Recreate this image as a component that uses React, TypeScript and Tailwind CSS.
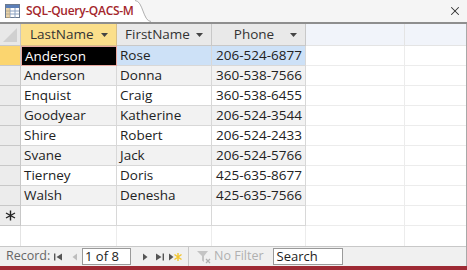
import React from 'react'
import { X } from 'lucide-react'

const rows = [
  ['Anderson', 'Rose', '206-524-6877'],
  ['Anderson', 'Donna', '360-538-7566'],
  ['Enquist', 'Craig', '360-538-6455'],
  ['Goodyear', 'Katherine', '206-524-3544'],
  ['Shire', 'Robert', '206-524-2433'],
  ['Svane', 'Jack', '206-524-5766'],
  ['Tierney', 'Doris', '425-635-8677'],
  ['Walsh', 'Denesha', '425-635-7566'],
]

function Arrow() {
  return (
    <svg width="7" height="4" viewBox="0 0 7 4" className="shrink-0">
      <path d="M0 0h7L3.5 4z" fill="#444" />
    </svg>
  )
}

function TabIcon() {
  return (
    <svg width="15" height="14" viewBox="0 0 15 14" className="shrink-0">
      <rect x="0.5" y="0.5" width="14" height="13" fill="#fff" stroke="#6b7a8f" />
      <rect x="1" y="1" width="13" height="3" fill="#5b7fb8" />
      <path d="M1 7h13M1 10h13M5 4v10M10 4v10" stroke="#8aa0c0" strokeWidth="1" />
      <rect x="1" y="4" width="4" height="10" fill="#d8b470" opacity="0.6" />
    </svg>
  )
}

export default function App() {
  const font = { fontFamily: '"Open Sans", "Noto Sans", sans-serif' }
  return (
    <div className="w-[467px] h-[270px] flex flex-col bg-white overflow-hidden text-[#222]" style={font}>
      {/* Tab strip */}
      <div className="h-[24px] shrink-0 flex justify-between bg-[#f5f5f5] border-b-2 border-[#8e8e8e]">
        <div className="flex">
          <div className="flex items-center gap-[6px] pl-[5px] pr-[2px] shrink-0 bg-white h-[22px] whitespace-nowrap">
            <TabIcon />
            <span className="text-[12px] font-semibold text-[#a4262c] tracking-[-0.3px]">SQL-Query-QACS-M</span>
          </div>
          <svg width="16" height="22" viewBox="0 0 16 22" className="shrink-0 -ml-px">
            <path d="M0 0 C8 0 8 22 16 22 L0 22 Z" fill="#fff" />
            <path d="M0 0.5 C8 0.5 8 21.5 16 21.5" fill="none" stroke="#b0b0b0" />
          </svg>
        </div>
        <div className="w-[24px] h-[22px] flex items-center justify-center text-[#333]">
          <X size={14} strokeWidth={1.8} />
        </div>
      </div>

      {/* Grid */}
      <div className="flex-1 flex flex-col border-r border-[#a8a8a8]">
        {/* Header */}
        <div className="h-[22px] flex text-[13.5px] text-[#333]">
          <div className="w-[21px] bg-[#e8e8e8] border-r border-b border-[#c8c8c8] relative">
            <svg width="20" height="21" viewBox="0 0 20 21" className="absolute left-0 top-0">
              <path d="M17 4 L17 18 L3 18 Z" fill="#d0d0d0" />
            </svg>
          </div>
          <div className="w-[96px] bg-[#fbdf8b] border-r border-b border-[#d8c088] flex items-center pl-[9px] pr-[8px] justify-between">
            <span>LastName</span>
            <Arrow />
          </div>
          <div className="w-[95px] bg-[#e9e9e9] border-r border-b border-[#c8c8c8] flex items-center pl-[8px] pr-[8px] justify-between">
            <span>FirstName</span>
            <Arrow />
          </div>
          <div className="w-[94px] bg-[#e9e9e9] border-r border-b border-[#c8c8c8] flex items-center pl-[6px] pr-[8px] justify-between">
            <span className="flex-1 text-center">Phone</span>
            <Arrow />
          </div>
          <div className="w-[99px] bg-[#f1f4fa] border-r border-b border-[#e4e4e4]" />
          <div className="flex-1 bg-[#f1f4fa] border-b border-[#e4e4e4]" />
        </div>

        {/* Rows */}
        {rows.map((r, i) => {
          const sel = i === 0
          const alt = i % 2 === 1
          const bg = alt ? 'bg-[#f2f2f2]' : 'bg-white'
          return (
            <div key={i} className="h-[20px] flex text-[13.5px]">
              <div className={`w-[21px] border-r border-b border-[#c8c8c8] ${sel ? 'bg-[#fbd56f]' : 'bg-[#ececec]'}`} />
              <div className={`w-[96px] flex items-center pl-[3px] ${sel ? 'bg-black text-white border border-[#e8a8a0]' : `${bg} border-r border-b border-[#d8d8d8]`}`}>
                {r[0]}
              </div>
              <div className={`w-[95px] border-r border-b border-[#d8d8d8] flex items-center pl-[3px] ${sel ? 'bg-[#cde1f7]' : bg}`}>
                {r[1]}
              </div>
              <div className={`w-[94px] border-r border-b border-[#d8d8d8] flex items-center pl-[4px] ${sel ? 'bg-[#cde1f7]' : bg}`}>
                {r[2]}
              </div>
              <div className="w-[99px] border-r border-b border-[#ececec]" />
              <div className="flex-1 border-b border-[#ececec]" />
            </div>
          )
        })}

        {/* New record row */}
        <div className="h-[20px] flex">
          <div className="w-[21px] bg-[#ececec] border-r border-b border-[#c8c8c8] flex items-center justify-center">
            <svg width="11" height="11" viewBox="0 0 11 11">
              <path d="M5.5 0.5v10M1 3l9 5M1 8l9-5" stroke="#222" strokeWidth="1.4" />
            </svg>
          </div>
          <div className="w-[96px] border-r border-b border-[#d8d8d8]" />
          <div className="w-[95px] border-r border-b border-[#d8d8d8]" />
          <div className="w-[94px] border-r border-b border-[#d8d8d8]" />
          <div className="w-[99px] border-r border-b border-[#ececec]" />
          <div className="flex-1 border-b border-[#ececec]" />
        </div>

        {/* Empty area */}
        <div className="flex-1 flex">
          <div className="w-[21px] border-r border-[#e4e4e4]" />
          <div className="w-[96px] border-r border-[#ececec]" />
          <div className="w-[95px] border-r border-[#ececec]" />
          <div className="w-[94px] border-r border-[#ececec]" />
          <div className="w-[99px] border-r border-[#ececec]" />
        </div>

        {/* Navigation bar */}
        <div className="h-[20px] flex items-center bg-[#f0f0f0] border-t border-[#c8c8c8] text-[12.5px] text-[#666]">
          <span className="pl-[6px] w-[50px]">Record:</span>
          <svg width="10" height="10" viewBox="0 0 10 10" className="ml-[3px]">
            <path d="M1 1.5h1.4v7H1z M9 1.5v7L3.5 5z" fill="#555" />
          </svg>
          <svg width="8" height="10" viewBox="0 0 8 10" className="ml-[8px]">
            <path d="M6 1.5v7L1.5 5z" fill="#bdbdbd" />
          </svg>
          <div className="ml-[3px] w-[49px] h-[17px] bg-white border border-[#9a9a9a] flex items-center pl-[2px] text-[#222] text-[13px]">
            1 of 8
          </div>
          <svg width="8" height="10" viewBox="0 0 8 10" className="ml-[10px]">
            <path d="M2 1.5v7L6.5 5z" fill="#555" />
          </svg>
          <svg width="10" height="10" viewBox="0 0 10 10" className="ml-[6px]">
            <path d="M1 1.5v7L6.5 5z M7.6 1.5H9v7H7.6z" fill="#555" />
          </svg>
          <svg width="14" height="10" viewBox="0 0 14 10" className="ml-[3px]">
            <path d="M1 1.5v7L5.5 5z" fill="#555" />
            <path d="M10 1v8M6.5 2.5l7 5M6.5 7.5l7-5" stroke="#f3c62e" strokeWidth="1.4" />
          </svg>
          <div className="ml-[6px] h-[19px] w-px bg-[#c8c8c8]" />
          <svg width="16" height="14" viewBox="0 0 16 14" className="ml-[7px]">
            <path d="M1 1h11L8 6v6l-2-1.5V6z" fill="#c4c4c4" />
            <path d="M10 9l4 4M14 9l-4 4" stroke="#b0b0b0" strokeWidth="1.3" />
          </svg>
          <span className="ml-[2px] text-[#b0b0b0]">No Filter</span>
          <div className="ml-[9px] w-[70px] h-[17px] bg-white border border-[#9a9a9a] flex items-center pl-[3px] text-[#222] text-[13px]">
            Search
          </div>
        </div>
      </div>

      <div className="h-[4px] shrink-0 bg-[#9e2a34]" />
    </div>
  )
}
